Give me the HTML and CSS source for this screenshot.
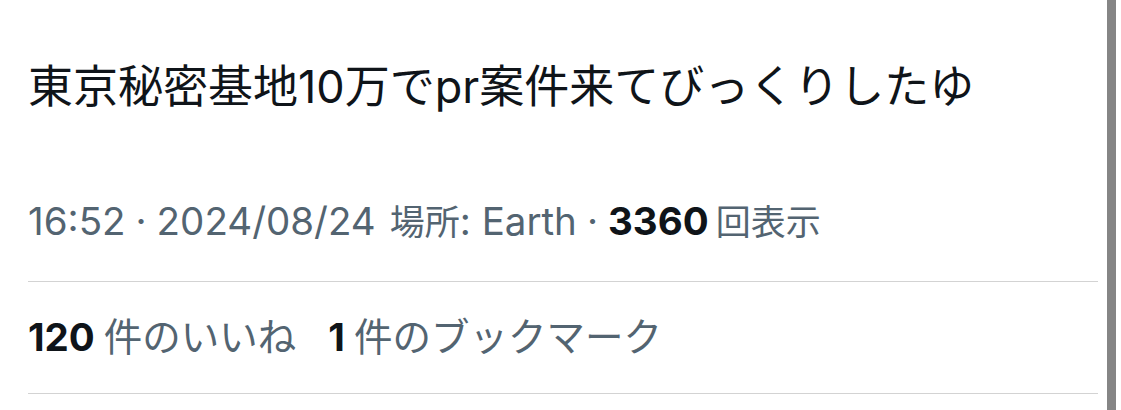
FILE: index.html
```html
<!DOCTYPE html>
<html lang="ja">
<head>
<meta charset="utf-8">
<title>Post</title>
<link rel="stylesheet" href="styles.css">
</head>
<body>
<div class="page">
  <main class="post">
    <div class="post-text">東京秘密基地10万でpr案件来てびっくりしたゆ</div>
    <div class="meta">
      <span>16:52</span><span class="dot">·</span><span>2024/08/24</span><span class="place"><span class="ja">場所</span>: Earth</span><span class="dot">·</span><b class="num">3360</b><span class="unit ja">回表示</span>
    </div>
    <div class="stats">
      <span class="stat"><b class="num">120</b><span class="unit">件のいいね</span></span>
      <span class="stat"><b class="num">1</b><span class="unit">件のブックマーク</span></span>
    </div>
  </main>
  <div class="gutter"></div>
  <div class="scrollbar"></div>
</div>
</body>
</html>
```
FILE: styles.css
```css
html, body {
  margin: 0;
  padding: 0;
  background: #ffffff;
}
body {
  font-family: Inter, "Noto Sans CJK JP", sans-serif;
  color: #0f1419;
}
.page {
  display: flex;
  height: 410px;
  overflow: hidden;
}
.post {
  width: 1070px;
  padding-left: 28px;
  flex: none;
}
.gutter {
  width: 9px;
  flex: none;
}
.scrollbar {
  width: 9px;
  flex: none;
  background: #858585;
}
.post-text {
  margin-top: 57px;
  font-size: 45px;
  line-height: 60px;
  color: #0f1419;
  white-space: nowrap;
}
.meta {
  margin-top: 79px;
  font-size: 38.5px;
  line-height: 50px;
  color: #536471;
  padding-bottom: 34px;
  border-bottom: 1px solid #d3d3d3;
  white-space: nowrap;
}
.meta .ja {
  font-size: 35px;
}
.dot {
  margin: 0 10px;
}
.place {
  margin-left: 14px;
}
.num {
  font-weight: 700;
  color: #0f1419;
}
.unit {
  margin-left: 9px;
}
.meta .unit {
  margin-left: 7px;
}
.stats {
  padding-top: 30px;
  padding-bottom: 31px;
  font-size: 38.5px;
  line-height: 50px;
  color: #536471;
  border-bottom: 1px solid #d3d3d3;
  white-space: nowrap;
  display: flex;
  gap: 32px;
}
.stat {
  display: inline-flex;
}
```
